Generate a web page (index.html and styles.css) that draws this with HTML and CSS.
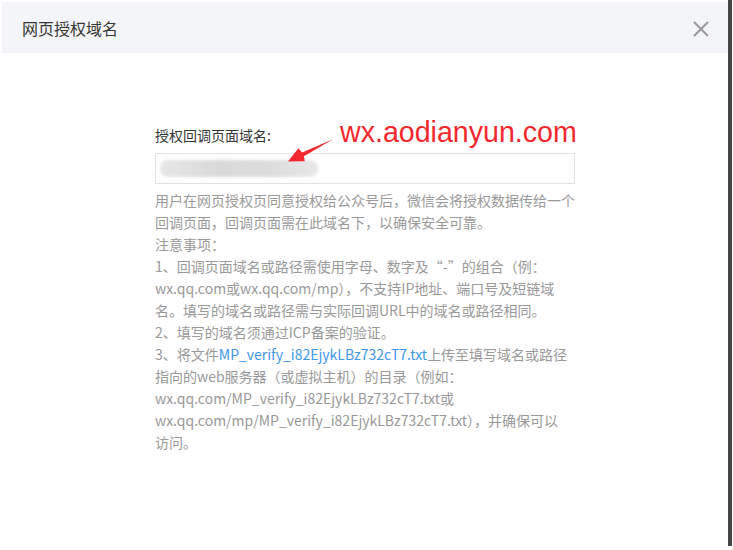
FILE: index.html
```html
<!doctype html>
<html lang="zh-CN">

<head>
  <meta charset="UTF-8" />
  <title>网页授权域名</title>
  <link rel="stylesheet" href="styles.css">
</head>

<body>
  <div class="page">
    <div class="dialog">
      <div class="dialog-header">
        <span class="dialog-title">网页授权域名</span>
        <svg class="close" width="16" height="16" viewBox="0 0 16 16">
          <path d="M1 1 L15 15 M15 1 L1 15" stroke="#9a9a9a" stroke-width="2" fill="none" />
        </svg>
      </div>

      <div class="dialog-body">
        <div class="form">
          <label class="form-label">授权回调页面域名:</label>
          <div class="form-input">
            <div class="blur-value"></div>
          </div>
          <p class="tips">
            用户在网页授权页同意授权给公众号后，微信会将授权数据传给一个<br>
            回调页面，回调页面需在此域名下，以确保安全可靠。<br>
            注意事项：<br>
            1、回调页面域名或路径需使用字母、数字及“-”的组合（例：<br>
            wx.qq.com或wx.qq.com/mp），不支持IP地址、端口号及短链域<br>
            名。填写的域名或路径需与实际回调URL中的域名或路径相同。<br>
            2、填写的域名须通过ICP备案的验证。<br>
            3、将文件<a class="link">MP_verify_i82EjykLBz732cT7.txt</a>上传至填写域名或路径<br>
            指向的web服务器（或虚拟主机）的目录（例如：<br>
            wx.qq.com/MP_verify_i82EjykLBz732cT7.txt或<br>
            wx.qq.com/mp/MP_verify_i82EjykLBz732cT7.txt），并确保可以<br>
            访问。
          </p>

          <!-- annotation drawn over the form -->
          <span class="note">wx.aodianyun.com</span>
          <svg class="note-arrow" width="60" height="40" viewBox="120 10 60 40">
            <polygon points="133,36.5 143.4,23.2 147.1,27.4 178,14.2 148.9,31.2 149.8,36.2" fill="#f3282e" />
          </svg>
        </div>
      </div>
    </div>
    <div class="edge"></div>
  </div>
</body>

</html>
```

FILE: styles.css
```css
* {
  margin: 0;
  padding: 0;
  box-sizing: border-box;
}

body {
  background: #fff;
  font-family: "Noto Sans CJK SC", "Liberation Sans", sans-serif;
  overflow: hidden;
}

.page {
  display: flex;
  width: 733px;
  height: 550px;
}

.dialog {
  width: 728px;
  padding: 2px 0 0 2px;
}

.edge {
  width: 4px;
  height: 546px;
  background: #454545;
}

.dialog-header {
  height: 51px;
  background: #f4f5f9;
  display: flex;
  align-items: center;
  justify-content: space-between;
  padding: 0 19px 0 20px;
}

.dialog-title {
  font-size: 16px;
  color: #353535;
}

.close {
  display: block;
  margin-top: 2px;
}

.dialog-body {
  padding: 72px 0 0 153px;
}

.form {
  position: relative;
  width: 420px;
}

.form-label {
  display: block;
  font-size: 14px;
  line-height: 20px;
  color: #353535;
}

.form-input {
  margin-top: 8px;
  height: 31px;
  border: 1px solid #e2e2e2;
  padding: 6px 4px;
}

.blur-value {
  width: 158px;
  height: 17px;
  border-radius: 8px;
  background: linear-gradient(90deg, #e6e6e6, #d9d9d9 40%, #dcdcdc 70%, #e8e8e8);
  filter: blur(1.5px);
}

.tips {
  margin-top: 5px;
  font-size: 14px;
  line-height: 22px;
  color: #999;
  white-space: nowrap;
}

.link {
  color: #3f97ea;
}

.note {
  position: absolute;
  left: 185px;
  top: -10px;
  font-family: "Liberation Sans", sans-serif;
  font-size: 28.6px;
  line-height: 34px;
  color: #f3282e;
}

.note-arrow {
  position: absolute;
  left: 120px;
  top: 10px;
}
```
